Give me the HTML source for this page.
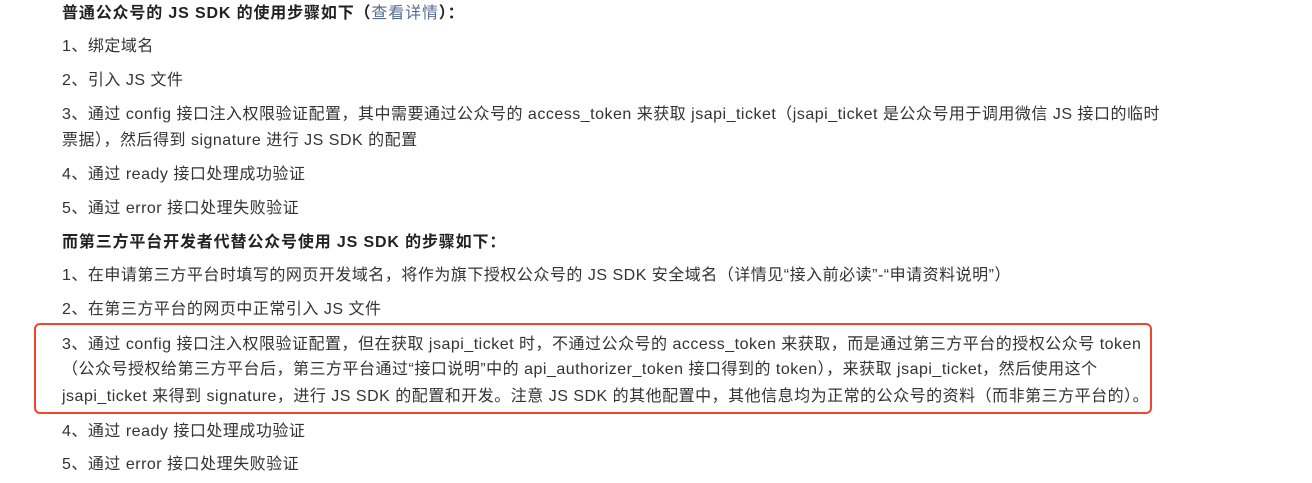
<!DOCTYPE html>
<html><head><meta charset="utf-8"><style>
body{margin:0;width:1312px;height:483px;background:#fff;position:relative;overflow:hidden;font-family:"Liberation Sans","Noto Sans CJK SC",sans-serif;font-size:16px;color:#333;letter-spacing:0.5px;}
.l{position:absolute;left:62px;white-space:nowrap;line-height:20px;}
b{font-weight:bold;color:#222;letter-spacing:0.85px}
a{color:#576b95;text-decoration:none;font-weight:normal}
.box{position:absolute;left:34px;top:323px;width:1114px;height:87px;border:2px solid #f0462d;border-radius:6px;}
</style></head><body>
<div class="l" style="top:4px"><b>普通公众号的 JS SDK 的使用步骤如下（<a>查看详情</a>）：</b></div>
<div class="l" style="top:37px">1、绑定域名</div>
<div class="l" style="top:71px">2、引入 JS 文件</div>
<div class="l" style="top:105px">3、通过 config 接口注入权限验证配置，其中需要通过公众号的 access_token 来获取 jsapi_ticket（jsapi_ticket 是公众号用于调用微信 JS 接口的临时</div>
<div class="l" style="top:131px">票据），然后得到 signature 进行 JS SDK 的配置</div>
<div class="l" style="top:165px">4、通过 ready 接口处理成功验证</div>
<div class="l" style="top:199px">5、通过 error 接口处理失败验证</div>
<div class="l" style="top:233px"><b>而第三方平台开发者代替公众号使用 JS SDK 的步骤如下：</b></div>
<div class="l" style="top:266px">1、在申请第三方平台时填写的网页开发域名，将作为旗下授权公众号的 JS SDK 安全域名（详情见“接入前必读”-“申请资料说明”）</div>
<div class="l" style="top:300px">2、在第三方平台的网页中正常引入 JS 文件</div>
<div class="box"></div>
<div class="l" style="top:335px">3、通过 config 接口注入权限验证配置，但在获取 jsapi_ticket 时，不通过公众号的 access_token 来获取，而是通过第三方平台的授权公众号 token</div>
<div class="l" style="top:360px">（公众号授权给第三方平台后，第三方平台通过“接口说明”中的 api_authorizer_token 接口得到的 token），来获取 jsapi_ticket，然后使用这个</div>
<div class="l" style="top:387px">jsapi_ticket 来得到 signature，进行 JS SDK 的配置和开发。注意 JS SDK 的其他配置中，其他信息均为正常的公众号的资料（而非第三方平台的）。</div>
<div class="l" style="top:422px">4、通过 ready 接口处理成功验证</div>
<div class="l" style="top:455px">5、通过 error 接口处理失败验证</div>
</body></html>
